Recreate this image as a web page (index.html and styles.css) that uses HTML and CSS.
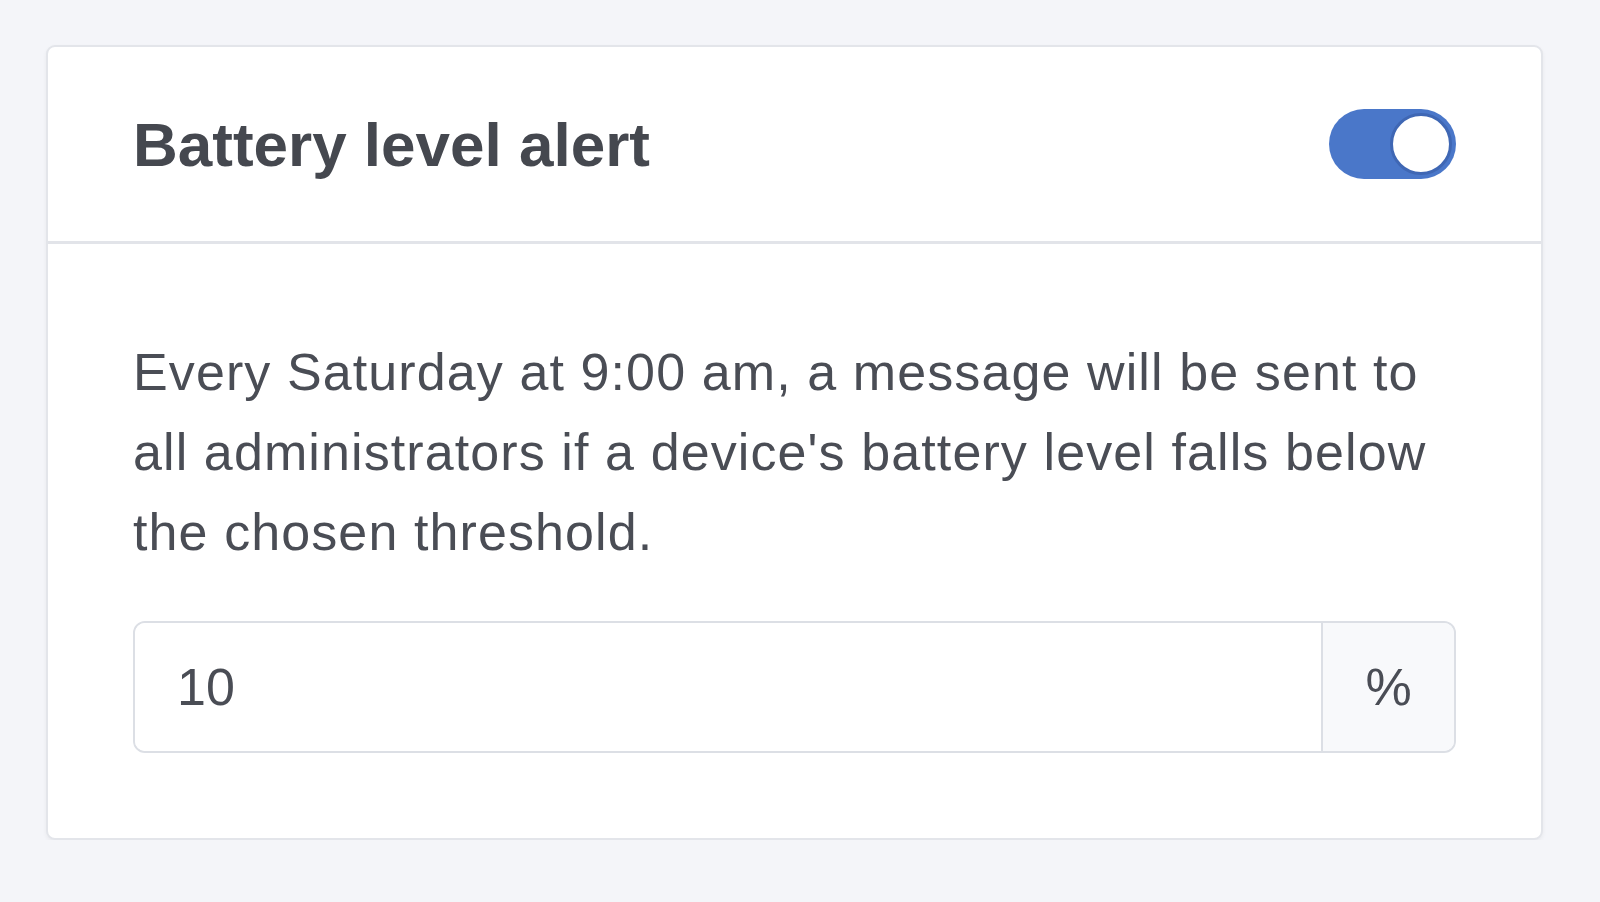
FILE: index.html
```html
<!DOCTYPE html>
<html lang="en">
<head>
  <meta charset="UTF-8" />
  <meta name="viewport" content="width=device-width, initial-scale=1.0"/>
  <title>Battery level alert</title>
  <link rel="stylesheet" href="styles.css">
</head>
<body>
  <div class="card">
    <div class="card-header">
      <h2>Battery level alert</h2>
      <div class="switch on"><span class="knob"></span></div>
    </div>
    <div class="card-body">
      <p class="desc">Every Saturday at 9:00 am, a message will be sent to all administrators if a device's battery level falls below the chosen threshold.</p>
      <div class="input-group">
        <input type="text" class="input" value="10" />
        <span class="addon">%</span>
      </div>
    </div>
  </div>
</body>
</html>
```

FILE: styles.css
```css
body { font-family: "Liberation Sans", Arial, sans-serif; margin: 0; padding: 45px 57px 0 46px; background-color: #f4f5f9; color: #4a4d55; }

.card { background: white; border: 2px solid #e3e5ea; border-radius: 9px; box-shadow: 0 2px 4px rgba(0,0,0,0.05); }
.card-header { display: flex; justify-content: space-between; align-items: center; height: 194px; padding: 0 85px; border-bottom: 3px solid #e2e4e9; }
.card-header h2 { margin: 0; font-size: 62px; font-weight: bold; color: #45484f; }

.switch { display: flex; justify-content: flex-end; align-items: center; width: 127px; height: 70px; padding: 0 4px; box-sizing: border-box; border-radius: 35px; background-color: #4a77c9; }
.knob { width: 56px; height: 56px; border-radius: 50%; background: white; border: 3px solid #3f67b4; }

.card-body { padding: 88px 85px 85px; }
.desc { margin: 0 0 49px; font-size: 52px; line-height: 80px; letter-spacing: 1.1px; color: #4a4d55; }

.input-group { display: flex; height: 132px; border: 2px solid #dcdfe5; border-radius: 12px; box-sizing: border-box; overflow: hidden; }
.input { flex: 1; min-width: 0; border: none; padding: 0 42px; font-family: inherit; font-size: 52px; color: #4a4d55; background: white; outline: none; }
.addon { display: flex; align-items: center; justify-content: center; width: 131px; border-left: 2px solid #dcdfe5; background-color: #f8f9fb; font-size: 52px; color: #4a4d55; }
```
